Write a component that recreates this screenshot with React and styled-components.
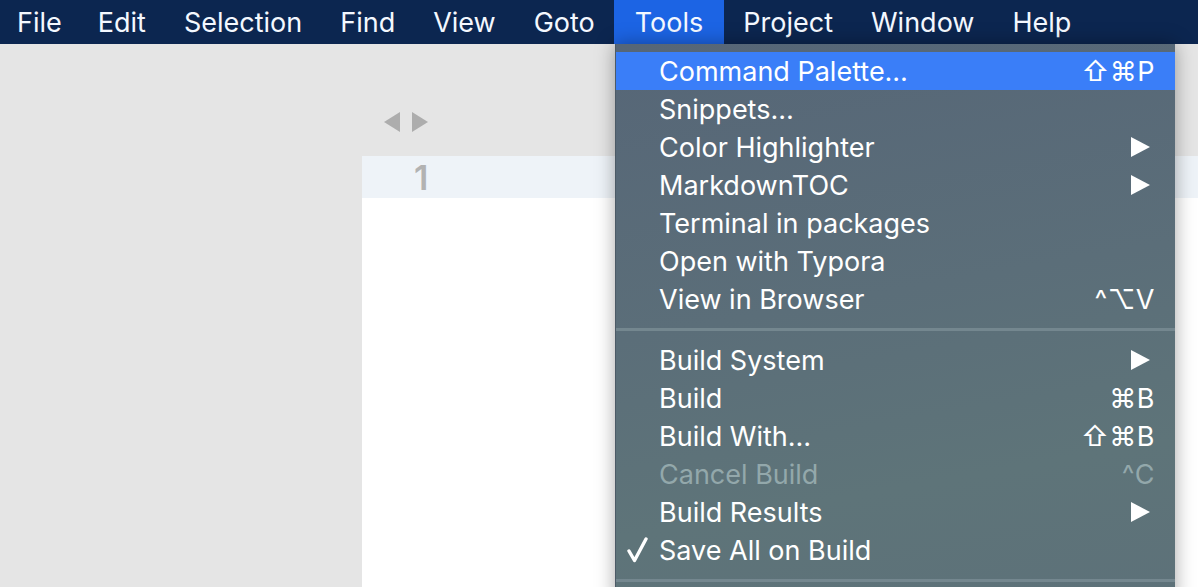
import styled, { createGlobalStyle } from 'styled-components'

const Global = createGlobalStyle`
  html, body {
    margin: 0;
    padding: 0;
    height: 100%;
    overflow: hidden;
    background: #e5e5e5;
  }
  #root { height: 100%; }
  * { box-sizing: border-box; }
`

const Screen = styled.div`
  position: relative;
  width: 1198px;
  height: 587px;
  display: flex;
  flex-direction: column;
  font-family: Inter, "Noto Sans", "Liberation Sans", sans-serif;
  overflow: hidden;
`

const MenuBar = styled.div`
  height: 44px;
  flex: none;
  display: flex;
  align-items: stretch;
  background: #0c2650;
`

const BarItem = styled.div`
  display: flex;
  align-items: center;
  padding: 0 ${p => p.$pad || 19}px;
  color: #f4f8ff;
  font-size: 27px;
  background: ${p => (p.$open ? '#1c64e4' : 'transparent')};
`

const Workspace = styled.div`
  flex: 1;
  display: flex;
  padding-left: 362px;
`

const Editor = styled.div`
  flex: 1;
  display: flex;
  flex-direction: column;
`

const TabStrip = styled.div`
  height: 112px;
  display: flex;
  align-items: center;
  gap: 12px;
  padding-left: 22px;
  padding-top: 44px;
`

const Arrow = styled.svg`
  width: 16px;
  height: 20px;
  fill: #adadad;
`

const Text = styled.div`
  flex: 1;
  background: #fff;
`

const LineRow = styled.div`
  height: 42px;
  background: #eef3f8;
  display: flex;
  align-items: center;
  padding-left: 52px;
  color: #b2b2b2;
  font-size: 34px;
  font-weight: 600;
`

const Dropdown = styled.div`
  position: absolute;
  left: 615px;
  top: 44px;
  width: 560px;
  height: 560px;
  padding-top: 8px;
  background: linear-gradient(170deg, #566677 0%, #5b6e79 45%, #5e7479 75%, #5d7179 100%);
  border-left: 1px solid #4c5a66;
  box-shadow: 0 0 18px rgba(0, 0, 0, 0.35);
`

const Item = styled.div`
  height: 38px;
  display: flex;
  align-items: center;
  padding: 0 20px 0 11px;
  font-size: 27px;
  color: ${p => (p.$disabled ? '#93a8ab' : '#ffffff')};
  background: ${p => (p.$active ? '#3a7ef8' : 'transparent')};
`

const Check = styled.span`
  width: 32px;
  flex: none;
  display: flex;
  align-items: center;
`

const CheckMark = styled.svg`
  width: 21px;
  height: 26px;
  fill: none;
  stroke: #ffffff;
  stroke-width: 3.4;
  stroke-linecap: round;
  stroke-linejoin: round;
`

const Label = styled.span`
  flex: 1;
`

const Keys = styled.span`
  letter-spacing: 0.5px;
`

const Sub = styled.svg`
  width: 19px;
  height: 20px;
  margin-right: 5px;
  fill: #ffffff;
`

const Separator = styled.div`
  height: 23px;
  display: flex;
  align-items: center;
  &::after {
    content: '';
    display: block;
    width: 100%;
    height: 3px;
    background: #74878f;
  }
`

const bar = ['File', 'Edit', 'Selection', 'Find', 'View', 'Goto', 'Tools', 'Project', 'Window', 'Help']

const groups = [
  [
    { label: 'Command Palette…', keys: '⇧⌘P', active: true },
    { label: 'Snippets…' },
    { label: 'Color Highlighter', sub: true },
    { label: 'MarkdownTOC', sub: true },
    { label: 'Terminal in packages' },
    { label: 'Open with Typora' },
    { label: 'View in Browser', keys: '^⌥V' },
  ],
  [
    { label: 'Build System', sub: true },
    { label: 'Build', keys: '⌘B' },
    { label: 'Build With…', keys: '⇧⌘B' },
    { label: 'Cancel Build', keys: '^C', disabled: true },
    { label: 'Build Results', sub: true },
    { label: 'Save All on Build', checked: true },
  ],
]

const Row = ({ it }) => (
  <Item $active={it.active} $disabled={it.disabled}>
    <Check>
      {it.checked && (
        <CheckMark viewBox="0 0 21 26">
          <path d="M2 14 L7.5 23.5 L19 2" />
        </CheckMark>
      )}
    </Check>
    <Label>{it.label}</Label>
    {it.keys && <Keys>{it.keys}</Keys>}
    {it.sub && (
      <Sub viewBox="0 0 19 20">
        <path d="M0 0 L19 10 L0 20 Z" />
      </Sub>
    )}
  </Item>
)

export default function App() {
  return (
    <Screen>
      <Global />
      <MenuBar>
        {bar.map((b, i) => (
          <BarItem key={b} $open={b === 'Tools'} $pad={i === 0 ? 17 : b === 'Tools' ? 21 : 19}>
            {b}
          </BarItem>
        ))}
      </MenuBar>
      <Workspace>
        <Editor>
          <TabStrip>
            <Arrow viewBox="0 0 16 20"><path d="M16 0 L0 10 L16 20 Z" /></Arrow>
            <Arrow viewBox="0 0 16 20"><path d="M0 0 L16 10 L0 20 Z" /></Arrow>
          </TabStrip>
          <Text>
            <LineRow>1</LineRow>
          </Text>
        </Editor>
      </Workspace>
      <Dropdown>
        {groups.map((g, gi) => (
          <div key={gi}>
            {g.map(it => <Row key={it.label} it={it} />)}
            <Separator />
          </div>
        ))}
      </Dropdown>
    </Screen>
  )
}
